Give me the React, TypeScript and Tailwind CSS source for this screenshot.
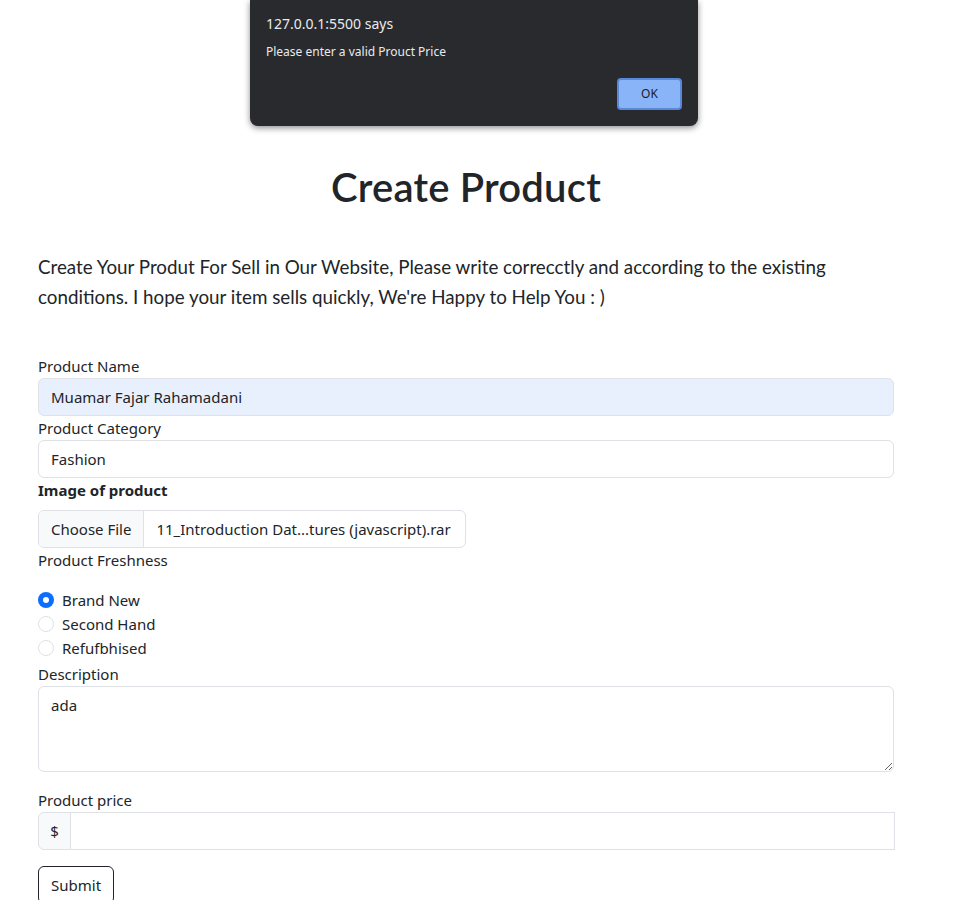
import React from 'react';

const labelClass = "block text-[15px] leading-6 text-[#212529]";
const inputClass =
  "block w-full h-[38px] px-3 rounded-[6px] border border-[#dee2e6] text-[15px] text-[#212529] outline-none";

function Radio({ label, checked }: { label: string; checked?: boolean }) {
  return (
    <label className="flex items-center h-6 gap-2 text-[15px] text-[#212529]">
      {checked ? (
        <span className="w-4 h-4 rounded-full bg-[#0d6efd] flex items-center justify-center">
          <span className="w-[6px] h-[6px] rounded-full bg-white" />
        </span>
      ) : (
        <span className="w-4 h-4 rounded-full border border-[#dee2e6] bg-white" />
      )}
      <span>{label}</span>
    </label>
  );
}

export default function App() {
  return (
    <div className="relative min-h-[900px] bg-white font-['Noto_Sans',sans-serif] text-[#212529]">
      {/* browser alert */}
      <div className="absolute left-[250px] top-0 w-[448px] h-[126px] bg-[#292a2d] rounded-b-[8px] shadow-[0_2px_6px_rgba(0,0,0,0.45)]">
        <div className="pl-4 pt-[14px] text-[14px] leading-5 text-[#e8eaed]">127.0.0.1:5500 says</div>
        <div className="pl-4 pt-[10px] text-[12px] leading-4 text-[#e8eaed]">Please enter a valid Prouct Price</div>
        <div className="absolute right-[16px] top-[78px] w-[65px] h-[32px] rounded-[4px] bg-[#8ab4f8] border-2 border-[#5a88d8] flex items-center justify-center text-[12px] text-[#202124]">
          OK
        </div>
      </div>

      <div className="ml-[38px] w-[856px] pt-[163px]">
        <h1 className="text-center text-[40px] leading-[48px] font-semibold font-['Lato',sans-serif] tracking-[0.2px]">Create Product</h1>

        <p className="mt-[41px] text-[18.8px] leading-[30px] font-['Lato',sans-serif]">
          Create Your Produt For Sell in Our Website, Please write correcctly and according to the existing conditions. I hope your item sells quickly, We're Happy to Help You : )
        </p>

        <form className="mt-[42px]">
          <label className={labelClass}>Product Name</label>
          <input className={inputClass + " bg-[#e8f0fe]"} defaultValue="Muamar Fajar Rahamadani" />

          <label className={labelClass}>Product Category</label>
          <input className={inputClass + " bg-white"} defaultValue="Fashion" />

          <label className={labelClass + " font-bold"}>Image of product</label>
          <div className="mt-2 flex w-[428px] h-[38px] rounded-[6px] border border-[#dee2e6] overflow-hidden text-[15px] whitespace-nowrap">
            <span className="px-3 flex items-center bg-[#f8f9fa] border-r border-[#dee2e6]">Choose File</span>
            <span className="px-3 flex items-center">11_Introduction Dat...tures (javascript).rar</span>
          </div>

          <label className={labelClass}>Product Freshness</label>
          <div className="mt-4">
            <Radio label="Brand New" checked />
            <Radio label="Second Hand" />
            <Radio label="Refufbhised" />
          </div>

          <label className={labelClass + " mt-[2px]"}>Description</label>
          <textarea
            className="block w-full h-[86px] px-3 py-[6px] rounded-[6px] border border-[#dee2e6] text-[15px] leading-6 outline-none"
            defaultValue="ada"
          />

          <label className={labelClass + " mt-[16px]"}>Product price</label>
          <div className="flex w-[857px] h-[38px]">
            <span className="w-[33px] flex items-center justify-center bg-[#f8f9fa] border border-[#dee2e6] rounded-l-[6px] text-[15px]">$</span>
            <input className="flex-1 border border-l-0 border-[#dee2e6] outline-none px-3" />
          </div>

          <button type="button" className="mt-4 h-[38px] px-3 rounded-[6px] border border-[#212529] text-[15px] bg-white">
            Submit
          </button>
        </form>
      </div>
    </div>
  );
}
